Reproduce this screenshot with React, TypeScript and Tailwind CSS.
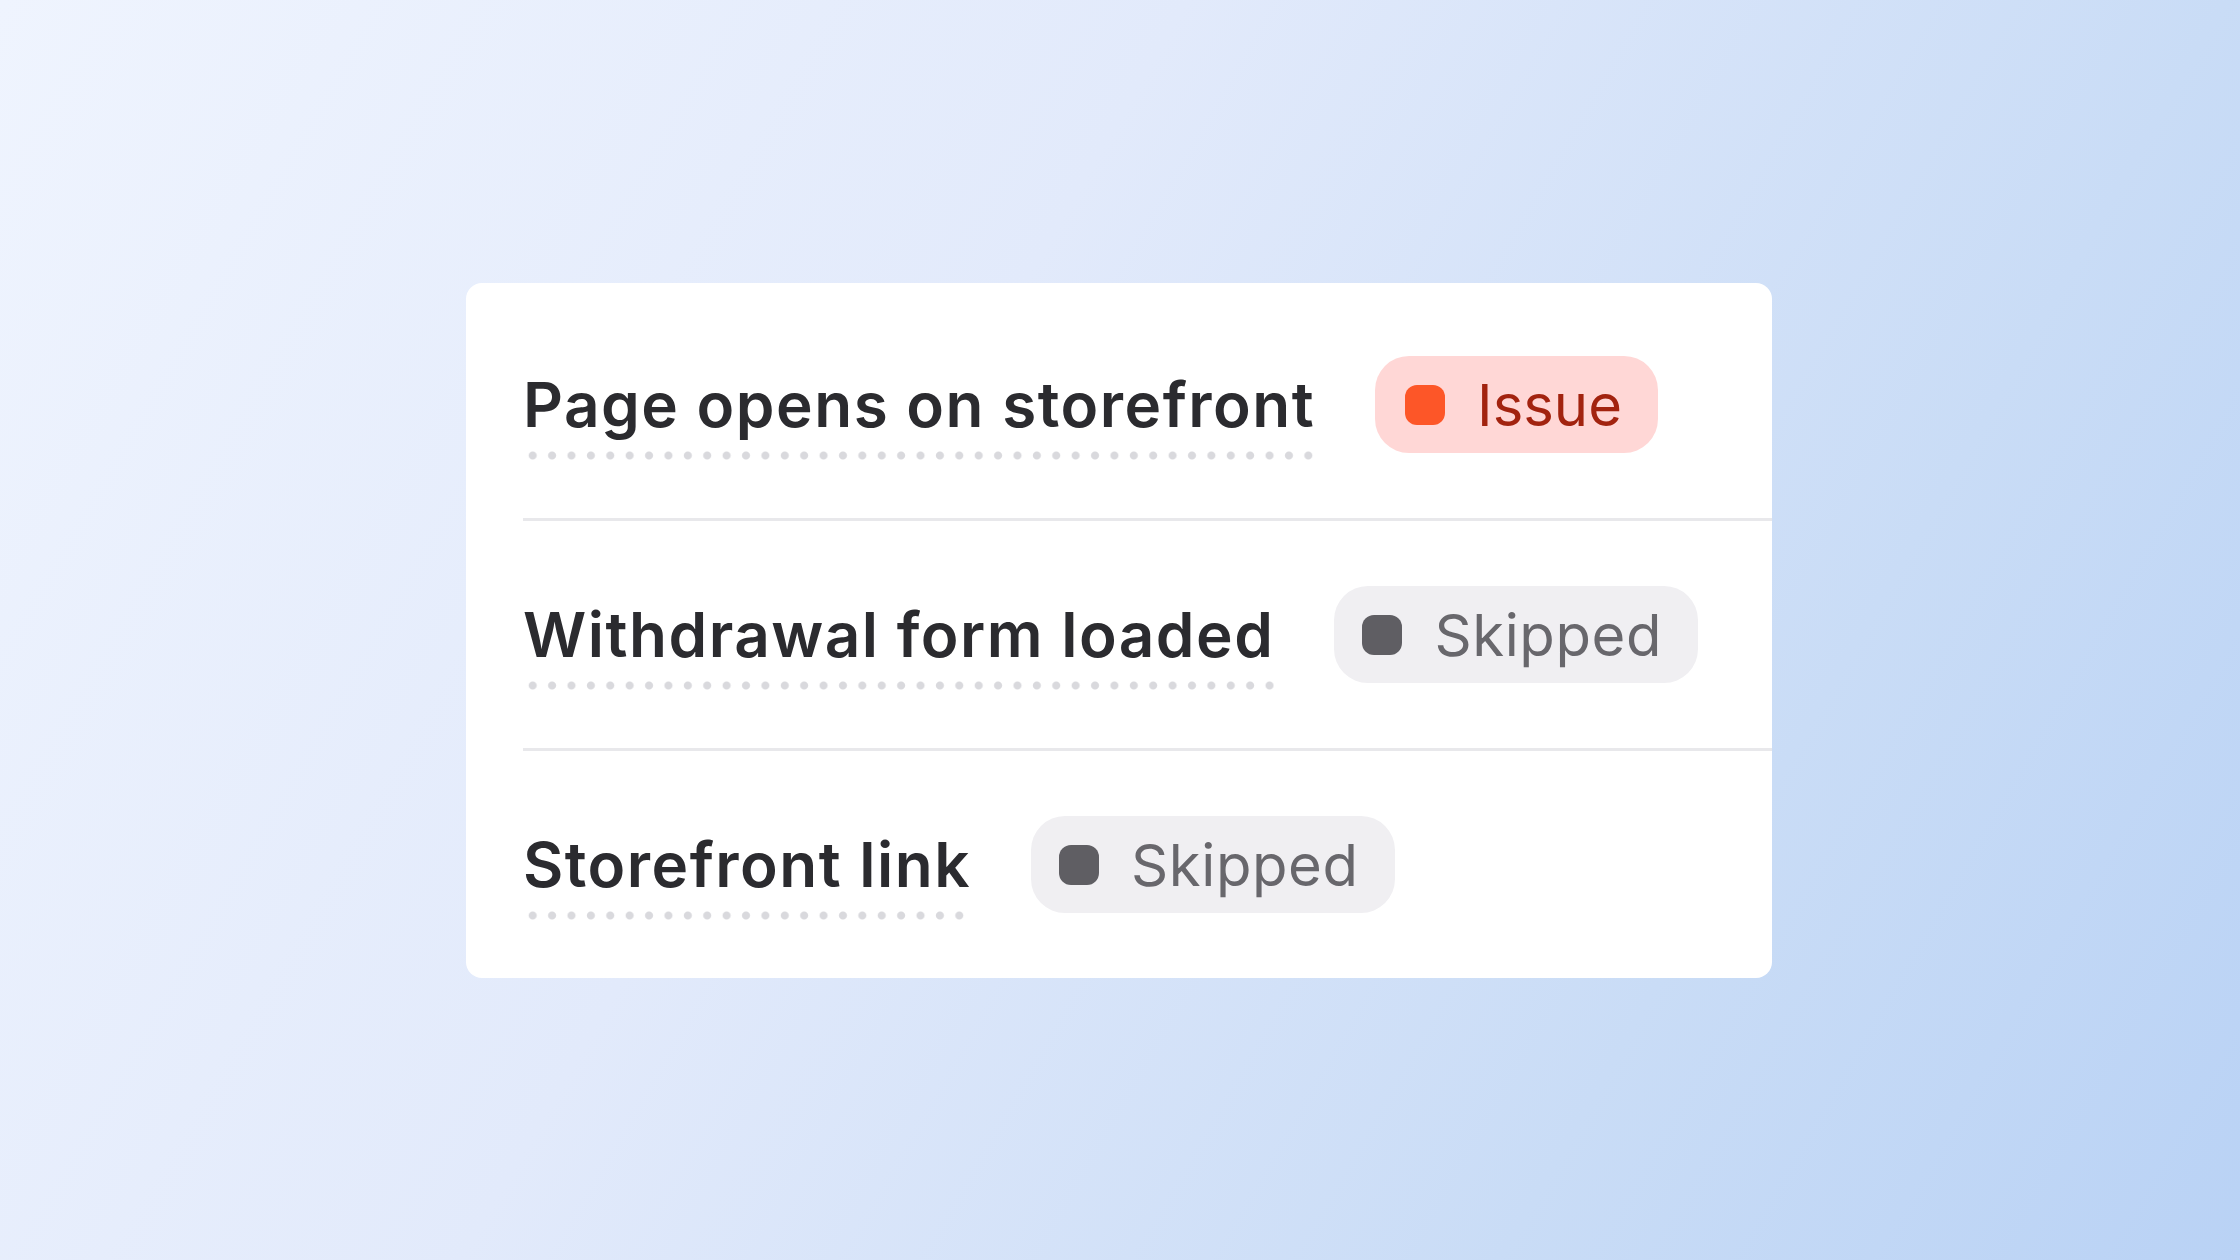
const checks = [
  { label: "Page opens on storefront", status: "issue" },
  { label: "Withdrawal form loaded", status: "skipped" },
  { label: "Storefront link", status: "skipped" },
];

function StatusBadge({ status }: { status: string }) {
  if (status === "issue") {
    return (
      <span className="flex h-[97px] shrink-0 items-center gap-[32px] rounded-[34px] bg-[#ffd7d6] pl-[30px] pr-[36px]">
        <span className="h-[40px] w-[40px] rounded-[12px] bg-[#fd5628]" />
        <span className="text-[58px] leading-none text-[#a2230f]">Issue</span>
      </span>
    );
  }
  return (
    <span className="flex h-[97px] shrink-0 items-center gap-[32px] rounded-[34px] bg-[#f0eff2] pl-[28px] pr-[36px]">
      <span className="h-[40px] w-[40px] rounded-[12px] bg-[#5f5e63]" />
      <span className="text-[58px] leading-none tracking-[0.6px] text-[#68676c]">Skipped</span>
    </span>
  );
}

export default function App() {
  return (
    <div
      className="flex h-[1260px] w-[2240px] items-start justify-center bg-[linear-gradient(120deg,#eff4fe_0%,#e2eafb_40%,#c9dcf6_75%,#b9d2f5_100%)] pt-[283px]"
      style={{ fontFamily: "Inter, 'Noto Sans', sans-serif" }}
    >
      <div className="ml-[-2px] w-[1306px] rounded-2xl bg-white pt-[8px]">
        {checks.map((check, index) => (
          <div key={index}>
            {index > 0 && <div className="ml-[57px] h-[3px] bg-[#e8e8eb]" />}
            <div className="flex h-[227px] items-center gap-[60px] pl-[57px]">
              <span className="-mb-[24px] bg-[radial-gradient(circle,#d9d9dd_3.5px,transparent_4.5px)] bg-[length:19.4px_9px] bg-bottom-left bg-repeat-x pb-[24px] text-[62px] font-semibold leading-none tracking-[1.5px] text-[#2b2b2f]">
                {check.label}
              </span>
              <StatusBadge status={check.status} />
            </div>
          </div>
        ))}
      </div>
    </div>
  );
}
